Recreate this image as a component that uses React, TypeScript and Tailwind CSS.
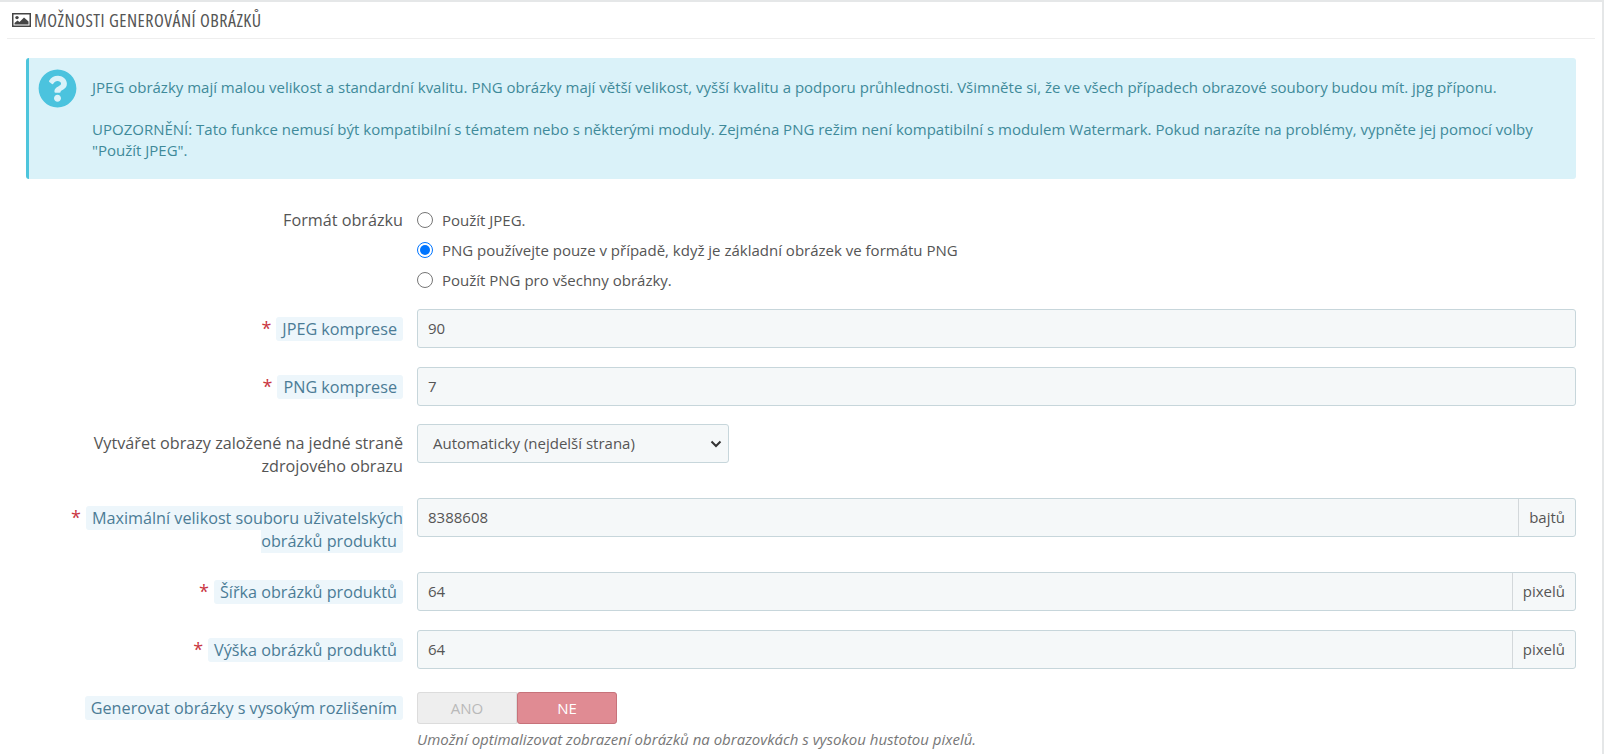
import { FaQuestionCircle } from 'react-icons/fa'

function Label({ children, required }: { children: string; required?: boolean }) {
  return (
    <label className="block w-[403px] shrink-0 pl-[60px] text-right text-[16.2px] leading-[23px]">
      {required && <span className="mr-[5px] text-[18px] text-[#c9353f]">*</span>}
      <span className="rounded-[3px] bg-[#edf6fb] px-[6px] py-[1px] text-[#4b7c96]">{children}</span>
    </label>
  )
}

function TextRow({ label, value, addon, className }: { label: string; value: string; addon?: string; className?: string }) {
  return (
    <div className={`flex gap-[14px] ${className ?? ''}`}>
      <div className="pt-[8px]">
        <Label required>{label}</Label>
      </div>
      <div className="flex h-[39px] flex-1 rounded-[3px] border border-[#c7d6db] bg-[#f5f8f9] text-[#555]">
        <div className="flex flex-1 items-center px-[10px]">{value}</div>
        {addon && <div className="flex items-center border-l border-[#d3d8db] px-[10px]">{addon}</div>}
      </div>
    </div>
  )
}

function Radio({ text, checked }: { text: string; checked?: boolean }) {
  return (
    <div className="flex h-[30px] items-center gap-[9px]">
      <span className={`flex h-[16px] w-[16px] items-center justify-center rounded-full border ${checked ? 'border-[#0075ff]' : 'border-[#767676]'} bg-white`}>
        {checked && <span className="h-[10px] w-[10px] rounded-full bg-[#0075ff]" />}
      </span>
      <span>{text}</span>
    </div>
  )
}

export default function App() {
  return (
    <div className="h-[754px] overflow-hidden border-t-2 border-r-2 border-[#e5e7e8] bg-white font-['Open_Sans',sans-serif] text-[15px] text-[#555]">
      <div className="mx-[7px] flex h-[37px] items-center gap-[3px] border-b border-[#eeeeee] pl-[5px] text-[#555]">
        <svg width="19" height="14" viewBox="0 0 19 14" className="shrink-0">
          <rect x="0.75" y="0.75" width="17.5" height="12.5" fill="#fff" stroke="#444" strokeWidth="1.5" />
          <circle cx="5" cy="4.6" r="1.7" fill="#444" />
          <path d="M2.5 11.5V10L5.5 7.4L7.5 9L12 4.5L16.5 8.5V11.5Z" fill="#444" />
        </svg>
        <span className="text-[18px] tracking-[0.5px] uppercase [font-stretch:75%]">Možnosti generování obrázků</span>
      </div>

      <div className="mx-[26px] mt-[19px] flex h-[121px] gap-[15px] rounded-[3px] border-l-[3px] border-[#4dc5dc] bg-[#daf2f9] pl-[9px] pr-[16px] pt-[11px] text-[#3f8a9a]">
        <FaQuestionCircle size={39} className="shrink-0 text-[#4bc3de]" />
        <div className="pt-[8px] leading-[21px]">
          <p>JPEG obrázky mají malou velikost a standardní kvalitu. PNG obrázky mají větší velikost, vyšší kvalitu a podporu průhlednosti. Všimněte si, že ve všech případech obrazové soubory budou mít. jpg příponu.</p>
          <p className="mt-[21px]">UPOZORNĚNÍ: Tato funkce nemusí být kompatibilní s tématem nebo s některými moduly. Zejména PNG režim není kompatibilní s modulem Watermark. Pokud narazíte na problémy, vypněte jej pomocí volby "Použít JPEG".</p>
        </div>
      </div>

      <div className="mt-[26px] pr-[26px]">
        <div className="flex gap-[14px]">
          <div className="w-[403px] shrink-0 pt-[3px] text-right text-[16.2px] leading-[24px]">Formát obrázku</div>
          <div>
            <Radio text="Použít JPEG." />
            <Radio text="PNG používejte pouze v případě, když je základní obrázek ve formátu PNG" checked />
            <Radio text="Použít PNG pro všechny obrázky." />
          </div>
        </div>

        <TextRow className="mt-[14px]" label="JPEG komprese" value="90" />
        <TextRow className="mt-[19px]" label="PNG komprese" value="7" />

        <div className="mt-[18px] flex gap-[14px]">
          <div className="w-[403px] shrink-0 pl-[60px] pt-[8px] text-right text-[16.2px] leading-[23px]">Vytvářet obrazy založené na jedné straně zdrojového obrazu</div>
          <div className="flex h-[39px] w-[312px] items-center justify-between rounded-[3px] border border-[#c7d6db] bg-[#f5f8f9] pl-[15px] pr-[5px]">
            <span>Automaticky (nejdelší strana)</span>
            <svg width="12" height="8" viewBox="0 0 12 8" className="mr-[1px]">
              <path d="M1.5 1.5 6 6l4.5-4.5" fill="none" stroke="#333" strokeWidth="2" />
            </svg>
          </div>
        </div>

        <TextRow className="mt-[20px]" label="Maximální velikost souboru uživatelských obrázků produktu" value="8388608" addon="bajtů" />
        <TextRow className="mt-[19px]" label="Šířka obrázků produktů" value="64" addon="pixelů" />
        <TextRow className="mt-[19px]" label="Výška obrázků produktů" value="64" addon="pixelů" />

        <div className="mt-[23px] flex gap-[14px]">
          <div className="pt-[5px]">
            <Label>Generovat obrázky s vysokým rozlišením</Label>
          </div>
          <div>
            <div className="flex h-[32px] w-[200px] rounded-[3px] bg-[#eeeeee]">
              <div className="flex w-[100px] items-center justify-center rounded-l-[3px] border border-[#dcdcdc] text-[#b9b9b9]">ANO</div>
              <div className="flex w-[100px] items-center justify-center rounded-[3px] border border-[#c7727a] bg-[#e08b93] font-medium text-white">NE</div>
            </div>
            <p className="mt-[4px] text-[15px] italic text-[#777]">Umožní optimalizovat zobrazení obrázků na obrazovkách s vysokou hustotou pixelů.</p>
          </div>
        </div>
      </div>
    </div>
  )
}
